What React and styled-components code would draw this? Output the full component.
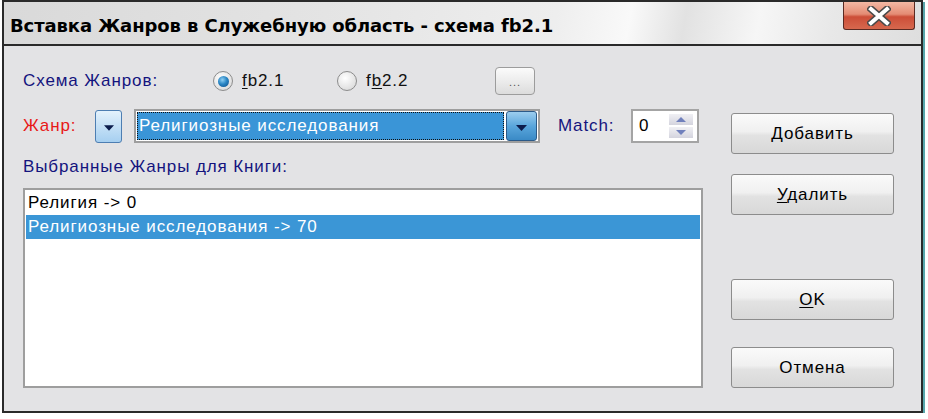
import React from "react";
import styled, { createGlobalStyle } from "styled-components";

const GlobalStyle = createGlobalStyle`
  html, body {
    margin: 0;
    padding: 0;
    background: #ffffff;
  }
  body {
    font-family: "Liberation Sans", Arial, sans-serif;
    letter-spacing: 0.9px;
  }
`;

// Window frame
const Window = styled.div`
  box-sizing: border-box;
  width: 921px;
  height: 413px;
  margin-left: 2px;
  border: 2px solid #2a2a2a;
  box-shadow: 2px 2px 0 #5aa6ac;
  background: #e3e3e5;
  display: flex;
  flex-direction: column;
`;

const TitleBar = styled.div`
  height: 42px;
  flex: none;
  border-bottom: 2px solid #2a2a2a;
  display: flex;
  justify-content: space-between;
  background: linear-gradient(
    100deg,
    #d9d9d9 0%,
    #e4e4e4 35%,
    #eeeeee 60%,
    #f9f9f9 68%,
    #e2e2e2 74%,
    #f6f6f6 82%,
    #e8e8e8 90%,
    #dedede 100%
  );
`;

const Title = styled.div`
  font-family: "DejaVu Sans", Verdana, sans-serif;
  font-weight: bold;
  font-size: 18px;
  color: #000;
  padding: 13px 0 0 6px;
  letter-spacing: -0.1px;
`;

const CloseButton = styled.div`
  width: 70px;
  height: 27px;
  margin-right: 6px;
  border: 1px solid #5a2a22;
  border-top: none;
  border-radius: 0 0 3px 3px;
  background: linear-gradient(180deg, #f2b8a4 0%, #e48c74 45%, #cc4e38 55%, #d6684e 100%);
  display: flex;
  align-items: center;
  justify-content: center;
`;

// Dialog body
const Body = styled.div`
  flex: 1;
  display: flex;
  padding: 21px 0 0 19px;
  gap: 28px;
`;

const Main = styled.div`
  width: 680px;
  display: flex;
  flex-direction: column;
`;

const Row = styled.div`
  display: flex;
  align-items: center;
  height: ${(p) => p.h}px;
  margin-top: ${(p) => p.mt || 0}px;
`;

const Label = styled.span`
  display: inline-block;
  width: ${(p) => p.w}px;
  flex: none;
  font-size: 17px;
  color: ${(p) => (p.red ? "#e81818" : "#14147e")};
`;

const RadioItem = styled.label`
  width: ${(p) => p.w}px;
  flex: none;
  display: flex;
  align-items: center;
  gap: 9px;
  font-size: 17px;
  color: #111;
`;

const RadioDot = styled.span`
  box-sizing: border-box;
  width: 20px;
  height: 20px;
  border-radius: 50%;
  border: 1px solid #8c8c8c;
  background: radial-gradient(circle at 40% 35%, #ffffff 0%, #e0e0e0 70%, #c6c6c6 100%);
  display: flex;
  align-items: center;
  justify-content: center;
  &::after {
    content: "";
    display: ${(p) => (p.checked ? "block" : "none")};
    width: 11px;
    height: 11px;
    border-radius: 50%;
    background: radial-gradient(circle at 40% 35%, #8fd0f4 0%, #2a86c4 45%, #0c4a86 100%);
  }
`;

const U = styled.span`
  text-decoration: underline;
  text-underline-offset: 2px;
`;

const SmallButton = styled.div`
  box-sizing: border-box;
  width: 40px;
  height: 28px;
  border: 1px solid #9c9c9c;
  border-radius: 4px;
  background: linear-gradient(180deg, #fbfbfb 0%, #ececec 50%, #dcdcdc 100%);
  display: flex;
  align-items: flex-end;
  justify-content: center;
  font-size: 11px;
  color: #555;
  letter-spacing: 1px;
  padding-bottom: 6px;
`;

const DropButton = styled.div`
  box-sizing: border-box;
  width: ${(p) => p.w}px;
  height: ${(p) => p.h}px;
  flex: none;
  border: 1px solid ${(p) => (p.strong ? "#2c5a88" : "#4d7eb2")};
  border-radius: 3px;
  background: ${(p) =>
    p.strong
      ? "linear-gradient(180deg, #9ccdee 0%, #5aa6dc 50%, #3a8ac6 100%)"
      : "linear-gradient(180deg, #e4f2fc 0%, #c4e0f6 50%, #a6cff0 100%)"};
  display: flex;
  align-items: center;
  justify-content: center;
  padding-top: 4px;
`;

const Combo = styled.div`
  box-sizing: border-box;
  width: 406px;
  height: 34px;
  margin-left: 12px;
  margin-right: 18px;
  border: 2px solid #9e9e9e;
  background: #fff;
  display: flex;
  align-items: center;
  padding: 1px;
  gap: 2px;
`;

const ComboValue = styled.div`
  flex: 1;
  height: 100%;
  box-sizing: border-box;
  background: #3a95d7;
  outline: 1px dotted #111;
  outline-offset: -1px;
  color: #fff;
  font-size: 17px;
  display: flex;
  align-items: center;
  padding-left: 2px;
`;

const Spin = styled.div`
  box-sizing: border-box;
  width: 68px;
  height: 34px;
  border: 2px solid #a4a4a4;
  background: #fff;
  display: flex;
  align-items: center;
  justify-content: space-between;
  padding: 0 4px 0 6px;
  font-size: 17px;
  color: #000;
`;

const SpinArrows = styled.div`
  display: flex;
  flex-direction: column;
  gap: 2px;
`;

const SpinHalf = styled.div`
  width: 24px;
  height: 11px;
  background: linear-gradient(180deg, #f0f0f4 0%, #d4d4de 100%);
  display: flex;
  align-items: center;
  justify-content: center;
`;

const ListBox = styled.div`
  box-sizing: border-box;
  width: 680px;
  height: 200px;
  margin-top: 11px;
  border: 2px solid #9e9e9e;
  background: #fff;
  padding: 1px;
`;

const ListItem = styled.div`
  height: 24px;
  line-height: 24px;
  font-size: 17px;
  padding-left: 2px;
  color: ${(p) => (p.selected ? "#fff" : "#000")};
  background: ${(p) => (p.selected ? "#3b96d6" : "transparent")};
`;

const Side = styled.div`
  width: 163px;
  display: flex;
  flex-direction: column;
  padding-top: 46px;
`;

const Button = styled.div`
  box-sizing: border-box;
  height: 41px;
  margin-top: ${(p) => p.mt || 0}px;
  border: 1px solid #8c8c8c;
  border-radius: 3px;
  background: linear-gradient(180deg, #fafafa 0%, #f0f0f0 45%, #e2e2e2 55%, #d8d8d8 100%);
  display: flex;
  align-items: center;
  justify-content: center;
  font-size: 17px;
  color: #000;
`;

const Triangle = ({ color = "#0c1c4c", w = 11 }) => (
  <svg width={w} height="6" viewBox="0 0 11 6">
    <path d="M0 0 H11 L5.5 6 Z" fill={color} />
  </svg>
);

const SpinArrow = ({ up }) => (
  <svg width="10" height="5" viewBox="0 0 10 5">
    <path d={up ? "M0 5 H10 L5 0 Z" : "M0 0 H10 L5 5 Z"} fill="#7080bc" />
  </svg>
);

const CloseIcon = () => (
  <svg width="24" height="20" viewBox="0 0 24 20">
    <path d="M4 3 L20 17 M20 3 L4 17" stroke="#4a4a4a" strokeWidth="7" strokeLinecap="square" />
    <path d="M4 3 L20 17 M20 3 L4 17" stroke="#ffffff" strokeWidth="4" strokeLinecap="square" />
  </svg>
);

export default function App() {
  return (
    <>
      <GlobalStyle />
      <Window>
        <TitleBar>
          <Title>Вставка Жанров в Служебную область - схема fb2.1</Title>
          <CloseButton>
            <CloseIcon />
          </CloseButton>
        </TitleBar>
        <Body>
          <Main>
            <Row h={28}>
              <Label w={190}>Схема Жанров:</Label>
              <RadioItem w={124}>
                <RadioDot checked />
                <span>
                  <U>f</U>b2.1
                </span>
              </RadioItem>
              <RadioItem w={158}>
                <RadioDot />
                <span>
                  f<U>b</U>2.2
                </span>
              </RadioItem>
              <SmallButton>...</SmallButton>
            </Row>
            <Row h={34} mt={14}>
              <Label w={72} red>
                Жанр:
              </Label>
              <DropButton w={27} h={33}>
                <Triangle w={10} />
              </DropButton>
              <Combo>
                <ComboValue>Религиозные исследования</ComboValue>
                <DropButton w={31} h={30} strong>
                  <Triangle />
                </DropButton>
              </Combo>
              <Label w={73}>Match:</Label>
              <Spin>
                <span>0</span>
                <SpinArrows>
                  <SpinHalf>
                    <SpinArrow up />
                  </SpinHalf>
                  <SpinHalf>
                    <SpinArrow />
                  </SpinHalf>
                </SpinArrows>
              </Spin>
            </Row>
            <Row h={20} mt={14}>
              <Label w={400}>Выбранные Жанры для Книги:</Label>
            </Row>
            <ListBox>
              <ListItem>Религия -&gt; 0</ListItem>
              <ListItem selected>Религиозные исследования -&gt; 70</ListItem>
            </ListBox>
          </Main>
          <Side>
            <Button>
              <span>
                <U>Д</U>обавить
              </span>
            </Button>
            <Button mt={20}>
              <span>
                <U>У</U>далить
              </span>
            </Button>
            <Button mt={64}>
              <span>
                <U>O</U>K
              </span>
            </Button>
            <Button mt={27}>Отмена</Button>
          </Side>
        </Body>
      </Window>
    </>
  );
}
